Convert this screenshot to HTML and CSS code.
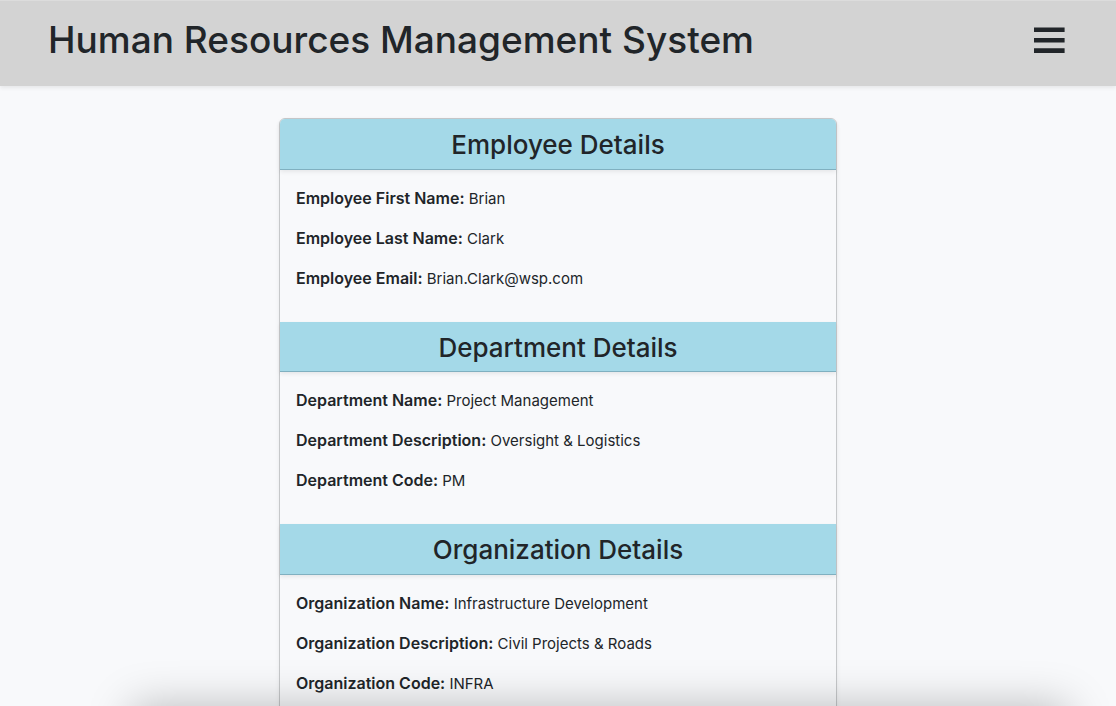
FILE: index.html
```html
<!DOCTYPE html>
<html lang="en">
<head>
  <meta charset="utf-8">
  <meta name="viewport" content="width=device-width, initial-scale=1">
  <title>Human Resources Management System</title>
  <link rel="stylesheet" href="styles.css">
</head>
<body>
  <header class="topbar">
    <h1 class="topbar-title">Human Resources Management System</h1>
    <button class="menu-button" type="button" aria-label="Menu">
      <svg class="menu-icon" viewBox="0 0 31 26" aria-hidden="true">
        <path d="M0 .4h30.6v4.6H0zM0 11h30.6v4.6H0zM0 21.3h30.6v4.7H0z" fill="currentColor"/>
      </svg>
    </button>
  </header>
  <main class="page">
    <article class="card">
      <section>
        <h2 class="card-header">Employee Details</h2>
        <div class="card-body">
          <p><strong>Employee First Name:</strong> Brian</p>
          <p><strong>Employee Last Name:</strong> Clark</p>
          <p><strong>Employee Email:</strong> Brian.Clark@wsp.com</p>
        </div>
      </section>
      <section>
        <h2 class="card-header">Department Details</h2>
        <div class="card-body">
          <p><strong>Department Name:</strong> Project Management</p>
          <p><strong>Department Description:</strong> Oversight &amp; Logistics</p>
          <p><strong>Department Code:</strong> PM</p>
        </div>
      </section>
      <section>
        <h2 class="card-header">Organization Details</h2>
        <div class="card-body">
          <p><strong>Organization Name:</strong> Infrastructure Development</p>
          <p><strong>Organization Description:</strong> Civil Projects &amp; Roads</p>
          <p><strong>Organization Code:</strong> INFRA</p>
        </div>
      </section>
    </article>
  </main>
  <div class="bottom-shade"></div>
</body>
</html>
```

FILE: styles.css
```css
* {
  box-sizing: border-box;
}

body {
  margin: 0;
  height: 100vh;
  overflow: hidden;
  background: #f8f9fb;
  color: #212529;
  font-family: Inter, "Liberation Sans", sans-serif;
  font-size: 15px;
  line-height: 24px;
}

.topbar {
  display: flex;
  align-items: flex-start;
  justify-content: space-between;
  padding: 15px 48px 22px;
  border-top: 1px solid #dcdcdc;
  background: #d3d3d3;
  box-shadow: 0 2px 4px rgba(0, 0, 0, 0.075);
}

.topbar-title {
  margin: 0;
  font-size: 37px;
  font-weight: 500;
  line-height: 48px;
}

.menu-button {
  display: flex;
  align-items: center;
  height: 48px;
  padding: 0 3px;
  border: 0;
  background: none;
  color: inherit;
  cursor: pointer;
}

.menu-icon {
  width: 31px;
  height: 26px;
}

.page {
  padding-top: 32px;
}

.card {
  width: 50%;
  margin: 0 auto;
  border: 1px solid #c6c8ca;
  border-radius: 6px;
  box-shadow: 0 2px 4px rgba(0, 0, 0, 0.075);
}

.card-header {
  margin: 0;
  padding: 9px 16px 7px;
  border-bottom: 1px solid #80b0c0;
  background: #a4d9e8;
  box-shadow: 0 2px 4px rgba(0, 0, 0, 0.075);
  font-size: 26px;
  font-weight: 500;
  line-height: 1.29;
  text-align: center;
}

.card section:first-child .card-header {
  border-radius: 5px 5px 0 0;
}

.card-body {
  padding: 17px 16px 15px;
}

.card-body p {
  margin: 0 0 16px;
}

.card-body strong {
  font-size: 16px;
  font-weight: 600;
  line-height: 1;
}

.bottom-shade {
  position: fixed;
  top: 100%;
  right: 48px;
  left: 132px;
  height: 80px;
  box-shadow: 0 0 44px rgba(0, 0, 0, 0.25);
  pointer-events: none;
}
```
